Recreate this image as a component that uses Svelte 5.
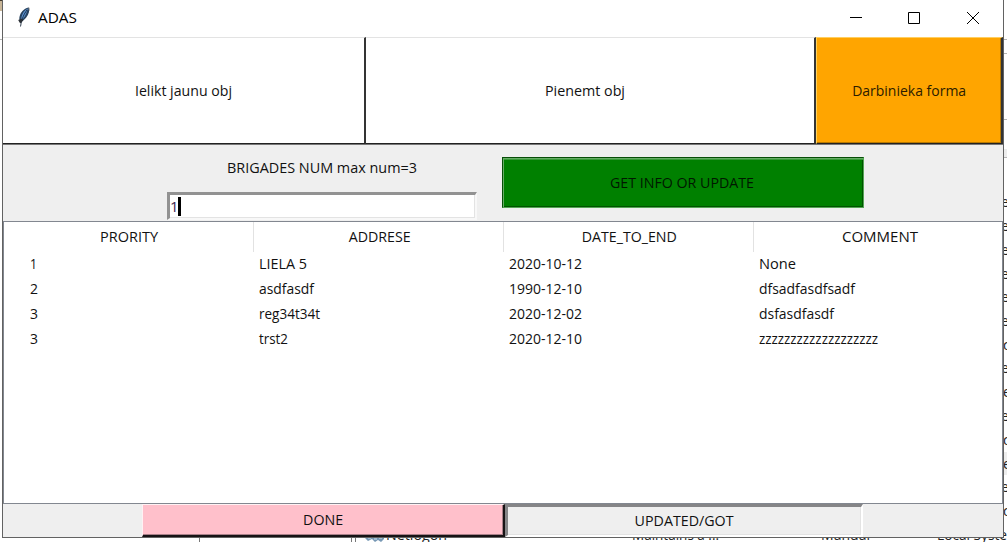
<script>
  const columns = [
    { name: 'PRORITY', width: 58 },
    { name: 'ADDRESE', width: 62 },
    { name: 'DATE_TO_END', width: 95 },
    { name: 'COMMENT', width: 76 }
  ];
  const rows = [
    [['1', 7], ['LIELA 5', 48], ['2020-10-12', 73], ['None', 37]],
    [['2', 8], ['asdfasdf', 55], ['1990-12-10', 73], ['dfsadfasdfsadf', 96]],
    [['3', 8], ['reg34t34t', 61], ['2020-12-02', 73], ['dsfasdfasdf', 75]],
    [['3', 8], ['trst2', 29], ['2020-12-10', 73], ['zzzzzzzzzzzzzzzzzzz', 119]]
  ];
  const edge = [
    [202, 'e', 0], [226, 'e', 0], [250, 'e', 0], [274, 'e', 0], [297, 'e', 0],
    [321, 'e', 0], [345, 'c', 2], [368, 'e', 0], [392, 'e', 2], [416, 'e', 0],
    [440, 'c', 2], [464, 'e', 2], [487, 'e', 0], [511, 'c', 2]
  ];
  const behind = [
    { text: 'Netlogon', x: 386, width: 61 },
    { text: 'Maintains a ...', x: 632, width: 87 },
    { text: 'Manual', x: 821, width: 49 },
    { text: 'Local Syste', x: 937, width: 70 }
  ];

  // Squeezes a label horizontally to the width reserved for it.
  function fit(node, width) {
    const natural = node.getBoundingClientRect().width;
    node.style.transform = `translateY(-1px) scaleX(${width / natural})`;
  }
</script>

{#snippet label(text, width)}
  <span class="label" use:fit={width}>{text}</span>
{/snippet}

<div class="desktop">
  <i class="rule left"></i>
  <i class="corner"></i>
  {#each [39, 53, 119, 157] as y}
    <i class="rule right" style="top:{y}px"></i>
  {/each}
  <i class="band" style="top:149px; height:8px"></i>
  <i class="band" style="top:452px; height:23px"></i>
  {#each edge as [y, ch, shift]}
    <span class="frag" style="top:{y - 10}px; left:{1001 + shift}px">{ch}</span>
  {/each}
  {#each [199, 351, 355] as x}
    <i class="post" style="left:{x}px"></i>
  {/each}
  <svg class="gear" width="20" height="6" viewBox="0 0 20 6"><path d="M0 0h19v2l-3 3-3-2-3 2-3-3-4 2-3-3z" fill="#7798b5" /><path d="M3 1h3M9 2h3M14 1h3" stroke="#d4e4ef" /></svg>
  {#each behind as b}
    <span class="frag" style="left:{b.x}px; top:526px">{@render label(b.text, b.width)}</span>
  {/each}

  <main class="window">
    <header>
      <svg class="feather" width="14" height="20" viewBox="0 0 14 20">
        <path d="M12 .5C8 1 4.500 4 3 8c-1 3-1 5 .5 7.500C8 13 11 9 12 5z" fill="#29435f" />
        <path d="M11 1.500C7.500 3 5.500 6 4.500 10l-.5 4C7 11 9 8 10 4z" fill="#5a93d3" />
        <path d="M10 3C7 7 5 11 3.500 19.500" fill="none" stroke="#18283c" stroke-width=".9" />
        <path d="M1.200 13l2 3.500 3-3-1-2z" fill="#2b3036" />
        <path d="M12 .7l.4 3" stroke="#999" />
      </svg>
      <span class="title">{@render label('ADAS', 39)}</span>
      <svg class="controls" width="124" height="14" viewBox="0 0 124 14" fill="none" stroke="#000" stroke-width="1">
        <path d="M0 7.500h12M58.500 2.500h11v11h-11zM117 2l12 12M129 2l-12 12" />
      </svg>
    </header>

    <nav>
      <button class="raised first">{@render label('Ielikt jaunu obj', 97)}</button>
      <button class="raised second">{@render label('Pienemt obj', 80)}</button>
      <button class="raised worker">{@render label('Darbinieka forma', 114)}</button>
    </nav>

    <section class="query">
      <div class="field">
        <div class="caption">{@render label('BRIGADES NUM max num=3', 190)}</div>
        <div class="entry">{@render label('1', 8)}<i class="caret"></i></div>
      </div>
      <button class="update">{@render label('GET INFO OR UPDATE', 144)}</button>
    </section>

    <section class="table">
      <div class="head">
        {#each columns as c}
          <div>{@render label(c.name, c.width)}</div>
        {/each}
      </div>
      {#each rows as row}
        <div class="row">
          {#each row as [text, width]}
            <div>{@render label(text, width)}</div>
          {/each}
        </div>
      {/each}
    </section>

    <footer>
      <button class="done">{@render label('DONE', 40)}</button>
      <div class="status">{@render label('UPDATED/GOT', 99)}</div>
    </footer>
  </main>
</div>

<style>
  :global(body) { background: #fff; overflow: hidden; }
  * { box-sizing: border-box; }
  .desktop {
    position: relative; width: 1007px; height: 542px; overflow: hidden; padding-left: 2px;
    font: 15px/20px "Open Sans", "Noto Sans", sans-serif; color: #111; background: #fff;
  }
  .label { display: inline-block; flex: none; white-space: pre; transform-origin: 0 50%; }
  .window {
    position: relative; width: 1002px; height: 538px; display: flex; flex-direction: column;
    border: solid #626262; border-width: 0 1px 1px; background: #efefef;
  }
  .rule { position: absolute; height: 1px; background: #b5b5b5; }
  .rule.left { left: 0; top: 39px; width: 2px; }
  .rule.right { left: 1004px; width: 3px; }
  .corner { position: absolute; left: 0; top: 0; width: 2px; height: 11px; background: #c9b698; border-top: 1px solid #42392c; }
  .band { position: absolute; left: 1004px; width: 3px; background: #ededed; }
  .frag { position: absolute; white-space: pre; font-size: 14px; color: #222; }
  .post { position: absolute; top: 538px; width: 1px; height: 4px; background: #777; }
  .gear { position: absolute; left: 365px; top: 537px; }

  header { height: 37px; flex: none; display: flex; align-items: center; padding-left: 14px; background: #fff; color: #000; }
  .feather { margin-top: -4px; }
  .title { width: 120px; margin-left: 7px; margin-top: -2px; }
  .controls { margin: -4px 29px 0 auto; overflow: visible; }

  button { font: inherit; color: inherit; padding: 0; margin: 0; border-radius: 0; }
  nav { height: 108px; flex: none; display: flex; border-bottom: 1px solid #777; }
  .raised, .update, .done, .status { display: flex; align-items: center; justify-content: center; }
  .raised { border: solid; border-width: 1px 2px 1px 0; border-color: #e3e3e3 #343434 #222 #e3e3e3; background: #fff; }
  .raised .label, .update .label, .done .label, .status .label, .head .label, .caption .label { transform-origin: 50% 50%; }
  .first { width: 363px; }
  .second { width: 450px; padding-right: 11px; }
  .worker { width: 187px; background: #ffa500; border-left: 1px solid #ffd35c; border-top-color: #ffcf60; box-shadow: inset -1px -1px #b87900; color: #2b1c00; }

  .query { height: 76px; flex: none; display: flex; padding-left: 164px; }
  .field { width: 310px; padding-top: 13px; }
  .caption { height: 34px; display: flex; justify-content: center; }
  .entry {
    height: 28px; display: flex; align-items: center; background: #fff;
    border: solid; border-width: 3px 2px 2px 3px; border-color: #929292 #f8f8f8 #f8f8f8 #929292;
    box-shadow: inset -1px -1px #e3e3e3;
  }
  .entry .label { width: 8px; color: #3d2550; }
  .caret { width: 3px; height: 19px; background: #000; }
  .update {
    width: 362px; height: 51px; margin: 12px 0 0 25px; padding-right: 2px; background: #008000; color: #001800;
    border: 1px solid; border-color: #084f08 #55a555 #55a555 #084f08;
    box-shadow: inset 1px 1px #66ad66, inset 0 2px #389938, inset -1px -1px #005400;
  }

  .table { height: 283px; flex: none; border: 1px solid #828790; background: #fff; }
  .head { height: 30px; display: flex; }
  .head div { width: 250px; flex: none; display: flex; align-items: center; justify-content: center; padding-left: 2px; border-right: 1px solid #e2e2e2; }
  .head div:last-child { border-right: 0; width: 248px; padding-left: 4px; }
  .row { height: 25px; display: flex; align-items: center; padding-bottom: 1px; }
  .row div { width: 250px; flex: none; padding-left: 5px; }
  .row div:first-child { padding-left: 26px; }
  .row div:last-child { width: 248px; }

  footer { height: 33px; flex: none; display: flex; padding-left: 139px; }
  .done { width: 363px; background: #ffc0cb; border: solid; border-width: 1px 2px 2px 1px; border-color: #fff1f3 #171315 #171315 #fff1f3; box-shadow: inset -1px -1px #a98089; }
  .status { width: 358px; border: solid; border-width: 3px 2px 2px 3px; border-color: #858587 #fff #fff #858587; box-shadow: inset -1px -1px #e3e3e3; }
</style>
